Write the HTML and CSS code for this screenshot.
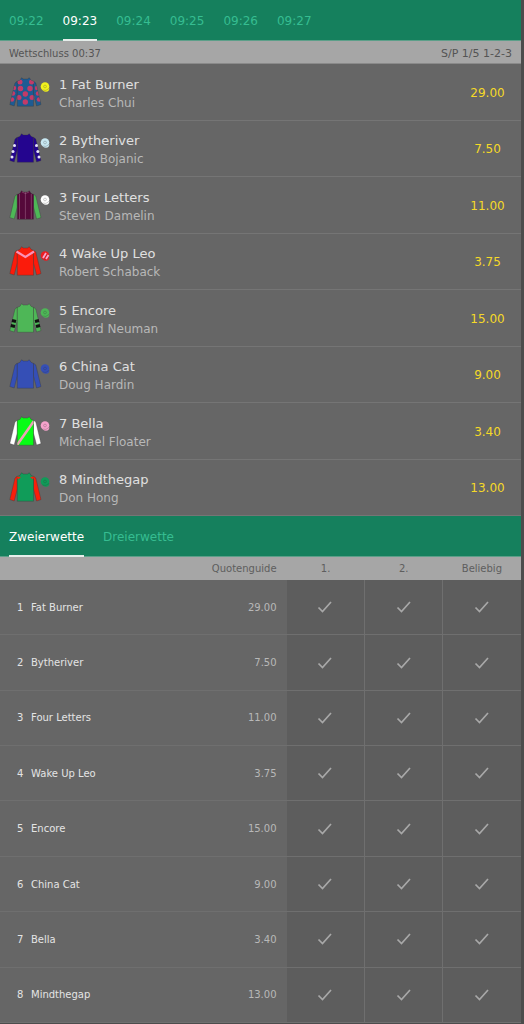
FILE: index.html
```html
<!DOCTYPE html>
<html lang="de">
<head>
<meta charset="utf-8">
<meta name="viewport" content="width=device-width, initial-scale=1">
<title>Wetten</title>
<link rel="stylesheet" href="styles.css">
</head>
<body>
<svg class="defs" aria-hidden="true">
  <defs>
    <path id="body" d="M12.500 0.800L14.300 2H18.500L20.300 0.800L22 3.200L24.500 4.500V29.200H8.300V4.500L11 3.200Z"/>
    <path id="sleeves" d="M8.300 4.200L6 6L0.800 27.600L5.200 29L8.300 17ZM24.500 4.200L26.800 6L32 27.600L27.600 29L24.500 17Z"/>
    <clipPath id="shape"><use href="#body"/><use href="#sleeves"/></clipPath>
    <clipPath id="torso"><use href="#body"/></clipPath>
    <g id="cap"><circle cx="36" cy="9.500" r="4.300"/><path d="M32.500 11.500Q36 15 40.300 11Q40.500 14.500 37 14.700Q33.500 14.500 32.500 11.500Z"/><path d="M33.500 13Q37 14.500 40 11.500M34.600 9.500a1.400 1.400 0 1 0 2.800 0a1.400 1.400 0 1 0 -2.800 0" fill="none" stroke="#333" stroke-opacity=".4" stroke-width=".6"/></g>
    <path id="tick" d="M1.500 7.500L5.500 11.500L14 2"/>
  </defs>
</svg>
<main class="page">
  <nav class="tabs" aria-label="Rennzeiten">
    <a class="tab" href="#r22">09:22</a>
    <a class="tab active" href="#r23" aria-current="page">09:23</a>
    <a class="tab" href="#r24">09:24</a>
    <a class="tab" href="#r25">09:25</a>
    <a class="tab" href="#r26">09:26</a>
    <a class="tab" href="#r27">09:27</a>
  </nav>
  <div class="info"><span>Wettschluss 00:37</span><span class="terms">S/P 1/5 1-2-3</span></div>
  <section class="runners">
    <article class="runner">
      <svg class="silk" viewBox="0 0 42 31"><g class="outline" fill="#1d5b93"><use href="#sleeves"/><use href="#body"/></g><g clip-path="url(#shape)" fill="#c23b68"><circle cx="11" cy="5" r="2.500"/><circle cx="22.500" cy="5" r="2.500"/><circle cx="11.500" cy="11.500" r="2.700"/><circle cx="21" cy="11.500" r="2.700"/><circle cx="16.300" cy="17" r="2.700"/><circle cx="10" cy="20.500" r="2.500"/><circle cx="23" cy="20.500" r="2.500"/><circle cx="16.300" cy="25" r="2.700"/><circle cx="5" cy="11" r="2.200"/><circle cx="4" cy="16.500" r="2.200"/><circle cx="3" cy="22.500" r="2.200"/><circle cx="28" cy="11" r="2.200"/><circle cx="29" cy="16.500" r="2.200"/><circle cx="30" cy="22.500" r="2.200"/></g><use href="#cap" fill="#f2f21c"/></svg>
      <div class="who"><h2>1 Fat Burner</h2><p>Charles Chui</p></div><button class="odds">29.00</button>
    </article>
    <article class="runner">
      <svg class="silk" viewBox="0 0 42 31"><g class="outline" fill="#24058f"><use href="#sleeves"/><use href="#body"/></g><g fill="#e8e4fa"><circle cx="5.500" cy="12.500" r="1.500"/><circle cx="4" cy="18.500" r="1.500"/><circle cx="3" cy="24" r="1.500"/><circle cx="27.500" cy="12.500" r="1.500"/><circle cx="28.800" cy="18.500" r="1.500"/><circle cx="30" cy="24" r="1.500"/></g><use href="#cap" fill="#c9e9f3"/></svg>
      <div class="who"><h2>2 Bytheriver</h2><p>Ranko Bojanic</p></div><button class="odds">7.50</button>
    </article>
    <article class="runner">
      <svg class="silk" viewBox="0 0 42 31"><g class="outline"><use href="#sleeves" fill="#4eb757"/><use href="#body" fill="#55093a"/></g><path d="M10.500 4V29M16.400 2V29M22.300 4V29M13 2Q16.400 5 20 2" fill="none" stroke="#b47fa1" stroke-opacity=".7" stroke-width=".6"/><use href="#cap" fill="#fff"/></svg>
      <div class="who"><h2>3 Four Letters</h2><p>Steven Damelin</p></div><button class="odds">11.00</button>
    </article>
    <article class="runner">
      <svg class="silk" viewBox="0 0 42 31"><g class="outline" fill="#fb1b0b"><use href="#sleeves"/><use href="#body"/></g><path d="M7.500 5.500L16.400 11L25 5.500" fill="none" stroke="#fa91b7" stroke-width="2.200"/><use href="#cap" fill="#ef1c20"/><path d="M34 12L37 7M37 13L39.500 9" stroke="#f8a4cd" stroke-width="1.800"/></svg>
      <div class="who"><h2>4 Wake Up Leo</h2><p>Robert Schaback</p></div><button class="odds">3.75</button>
    </article>
    <article class="runner">
      <svg class="silk" viewBox="0 0 42 31"><g class="outline" fill="#4eb757"><use href="#sleeves"/><use href="#body"/></g><path d="M3 17.500L7 18.500M1.800 22.500L6 23.500M26 18.500L30 17.500M27 23.500L31 22.500" stroke="#111" stroke-width="3"/><use href="#cap" fill="#4eb757"/></svg>
      <div class="who"><h2>5 Encore</h2><p>Edward Neuman</p></div><button class="odds">15.00</button>
    </article>
    <article class="runner">
      <svg class="silk" viewBox="0 0 42 31"><g class="outline" fill="#354fb6"><use href="#sleeves"/><use href="#body"/></g><use href="#cap" fill="#354fb6"/></svg>
      <div class="who"><h2>6 China Cat</h2><p>Doug Hardin</p></div><button class="odds">9.00</button>
    </article>
    <article class="runner">
      <svg class="silk" viewBox="0 0 42 31"><g class="outline"><use href="#sleeves" fill="#fff"/><use href="#body" fill="#08fc16"/></g><path d="M8 29L25 5" stroke="#eda3b5" stroke-width="2.600" clip-path="url(#torso)"/><use href="#cap" fill="#f6a3cc"/></svg>
      <div class="who"><h2>7 Bella</h2><p>Michael Floater</p></div><button class="odds">3.40</button>
    </article>
    <article class="runner">
      <svg class="silk" viewBox="0 0 42 31"><g class="outline"><use href="#sleeves" fill="#f91f0b"/><use href="#body" fill="#109c59"/></g><path d="M7.500 4.500L12 5L9 7.500ZM25.300 4.500L21 5L24 7.500Z" fill="#f91f0b"/><use href="#cap" fill="#109c59"/></svg>
      <div class="who"><h2>8 Mindthegap</h2><p>Don Hong</p></div><button class="odds">13.00</button>
    </article>
  </section>
  <nav class="tabs" aria-label="Wettarten">
    <a class="tab active" href="#zweier" aria-current="page">Zweierwette</a>
    <a class="tab" href="#dreier">Dreierwette</a>
  </nav>
  <table class="bets">
    <thead><tr><th class="guide" scope="col" colspan="2">Quotenguide</th><th scope="col">1.</th><th scope="col">2.</th><th scope="col">Beliebig</th></tr></thead>
    <tbody>
      <tr><td class="horse"><span>1</span>Fat Burner</td><td class="price">29.00</td><td class="pick"><button aria-label="Fat Burner 1."><svg viewBox="0 0 16 14"><use href="#tick"/></svg></button></td><td class="pick"><button aria-label="Fat Burner 2."><svg viewBox="0 0 16 14"><use href="#tick"/></svg></button></td><td class="pick"><button aria-label="Fat Burner beliebig"><svg viewBox="0 0 16 14"><use href="#tick"/></svg></button></td></tr>
      <tr><td class="horse"><span>2</span>Bytheriver</td><td class="price">7.50</td><td class="pick"><button aria-label="Bytheriver 1."><svg viewBox="0 0 16 14"><use href="#tick"/></svg></button></td><td class="pick"><button aria-label="Bytheriver 2."><svg viewBox="0 0 16 14"><use href="#tick"/></svg></button></td><td class="pick"><button aria-label="Bytheriver beliebig"><svg viewBox="0 0 16 14"><use href="#tick"/></svg></button></td></tr>
      <tr><td class="horse"><span>3</span>Four Letters</td><td class="price">11.00</td><td class="pick"><button aria-label="Four Letters 1."><svg viewBox="0 0 16 14"><use href="#tick"/></svg></button></td><td class="pick"><button aria-label="Four Letters 2."><svg viewBox="0 0 16 14"><use href="#tick"/></svg></button></td><td class="pick"><button aria-label="Four Letters beliebig"><svg viewBox="0 0 16 14"><use href="#tick"/></svg></button></td></tr>
      <tr><td class="horse"><span>4</span>Wake Up Leo</td><td class="price">3.75</td><td class="pick"><button aria-label="Wake Up Leo 1."><svg viewBox="0 0 16 14"><use href="#tick"/></svg></button></td><td class="pick"><button aria-label="Wake Up Leo 2."><svg viewBox="0 0 16 14"><use href="#tick"/></svg></button></td><td class="pick"><button aria-label="Wake Up Leo beliebig"><svg viewBox="0 0 16 14"><use href="#tick"/></svg></button></td></tr>
      <tr><td class="horse"><span>5</span>Encore</td><td class="price">15.00</td><td class="pick"><button aria-label="Encore 1."><svg viewBox="0 0 16 14"><use href="#tick"/></svg></button></td><td class="pick"><button aria-label="Encore 2."><svg viewBox="0 0 16 14"><use href="#tick"/></svg></button></td><td class="pick"><button aria-label="Encore beliebig"><svg viewBox="0 0 16 14"><use href="#tick"/></svg></button></td></tr>
      <tr><td class="horse"><span>6</span>China Cat</td><td class="price">9.00</td><td class="pick"><button aria-label="China Cat 1."><svg viewBox="0 0 16 14"><use href="#tick"/></svg></button></td><td class="pick"><button aria-label="China Cat 2."><svg viewBox="0 0 16 14"><use href="#tick"/></svg></button></td><td class="pick"><button aria-label="China Cat beliebig"><svg viewBox="0 0 16 14"><use href="#tick"/></svg></button></td></tr>
      <tr><td class="horse"><span>7</span>Bella</td><td class="price">3.40</td><td class="pick"><button aria-label="Bella 1."><svg viewBox="0 0 16 14"><use href="#tick"/></svg></button></td><td class="pick"><button aria-label="Bella 2."><svg viewBox="0 0 16 14"><use href="#tick"/></svg></button></td><td class="pick"><button aria-label="Bella beliebig"><svg viewBox="0 0 16 14"><use href="#tick"/></svg></button></td></tr>
      <tr><td class="horse"><span>8</span>Mindthegap</td><td class="price">13.00</td><td class="pick"><button aria-label="Mindthegap 1."><svg viewBox="0 0 16 14"><use href="#tick"/></svg></button></td><td class="pick"><button aria-label="Mindthegap 2."><svg viewBox="0 0 16 14"><use href="#tick"/></svg></button></td><td class="pick"><button aria-label="Mindthegap beliebig"><svg viewBox="0 0 16 14"><use href="#tick"/></svg></button></td></tr>
    </tbody>
  </table>
</main>
</body>
</html>
```
FILE: styles.css
```css
* { box-sizing: border-box; }
body {
  margin: 0;
  padding-right: 3px;
  background: #4c4c4c;
  font-family: Verdana, "DejaVu Sans", sans-serif;
  font-size: 12px;
}
.defs { position: absolute; width: 0; height: 0; }
.page { background: #666; }
button { border: 0; background: none; padding: 0; font: inherit; color: inherit; cursor: pointer; }
h2, p { margin: 0; font-weight: 400; }

.tabs {
  display: flex;
  gap: 19px;
  height: 41px;
  padding: 0 9px;
  background: #15805d;
  border-bottom: 1px solid #5c9f89;
}
.tab {
  display: flex;
  align-items: center;
  height: 41px;
  padding-top: 3px;
  border-bottom: 2px solid transparent;
  color: #36bd91;
  text-decoration: none;
}
.tab.active { color: #fff; border-color: #e6eeeb; }

.info {
  display: flex;
  align-items: center;
  justify-content: space-between;
  height: 23px;
  padding: 2px 9px 0;
  background: #a6a6a6;
  border-bottom: 1px solid #8a8a8a;
  color: #545454;
  font-size: 10px;
}
.info .terms { font-size: 11px; }

.runners {
  display: grid;
  grid-auto-rows: 1fr;
  min-height: 452px;
}
.runner {
  display: flex;
  align-items: center;
  padding: 1px 0 0 9px;
  border-bottom: 1px solid #757575;
}
.silk { width: 42px; height: 31px; margin-right: 8px; }
.outline { stroke: #333; stroke-opacity: .4; stroke-width: .8; }
.who { flex: 1; padding-top: 3px; }
.who h2 { font-size: 13px; line-height: 18px; color: #e0e0e0; }
.who p { line-height: 18px; color: #b8b8b8; }
.odds { width: 67px; padding-top: 1px; text-align: center; color: #f5d928; }

.bets {
  width: 100%;
  height: 466px;
  table-layout: fixed;
  border-collapse: collapse;
  font-size: 10px;
}
.bets th {
  width: 15%;
  height: 23px;
  padding: 0;
  background: #a6a6a6;
  color: #5e5e5e;
  font-weight: 400;
}
.bets th.guide { width: 55%; padding-right: 10px; text-align: right; }
.bets td { padding: 0; border-bottom: 1px solid #6f6f6f; }
.bets .horse { color: #e4e4e4; }
.horse span { display: inline-block; width: 31px; padding-left: 17px; }
.bets .price { padding-right: 10px; text-align: right; color: #b8b8b8; }
.bets .pick { background: #5d5d5d; border-right: 1px solid #6f6f6f; }
.bets .pick:last-child { border-right: 0; }
.pick button { display: flex; width: 100%; height: 54px; align-items: center; justify-content: center; }
.pick svg { width: 16px; height: 14px; fill: none; stroke: #a8a8a8; stroke-width: 1.7; }
```
